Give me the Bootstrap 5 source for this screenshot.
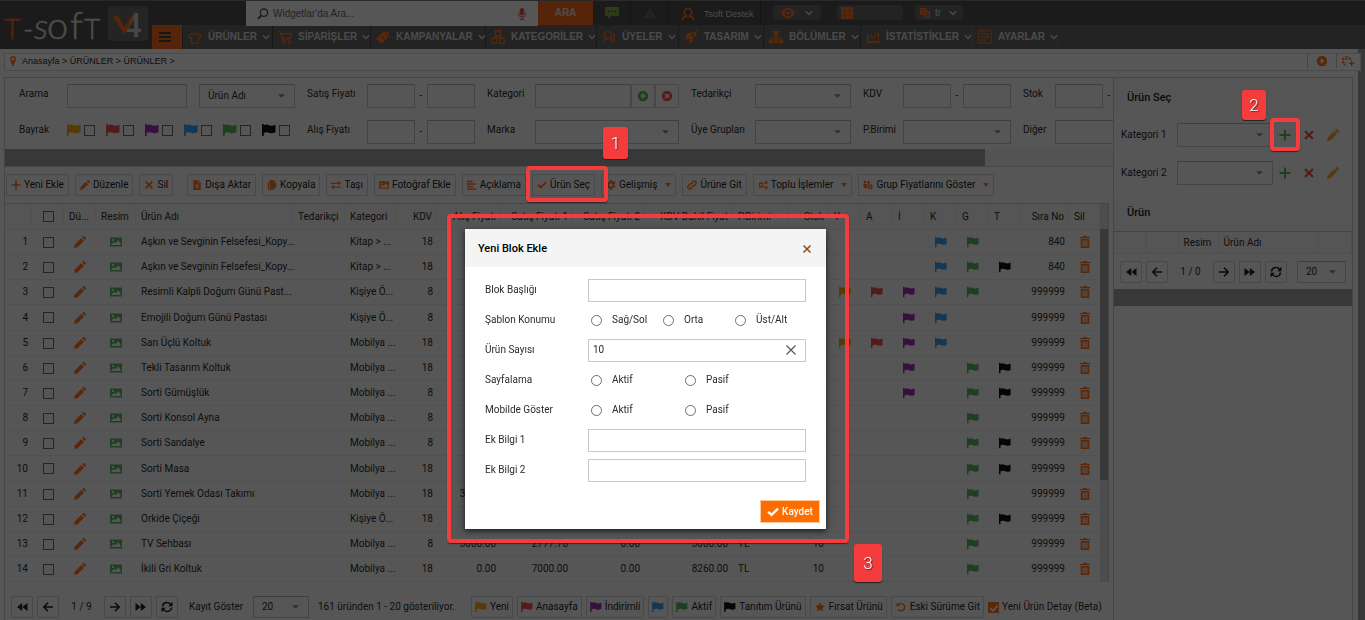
<!DOCTYPE html>
<html lang="tr">
<head>
<meta charset="utf-8">
<meta name="viewport" content="width=device-width, initial-scale=1">
<title>T-Soft V4 - Ürünler</title>
<link href="https://cdn.jsdelivr.net/npm/bootstrap@5.3.0/dist/css/bootstrap.min.css" rel="stylesheet">
<style>
:root{--or:#ff7420;--line:#ccc;--ink:#2b2b2b}
html,body{height:100%}
body{font-family:Roboto,"Liberation Sans",sans-serif;font-size:10px;line-height:14px;color:var(--ink);background:#fafafa;overflow:hidden}
a{color:inherit;text-decoration:none}
button,input,select{font:inherit;color:inherit}
.ic{width:12px;height:12px;flex:none;fill:currentColor;display:block}
.ic.s14{width:14px;height:14px}
.ic.s8{width:8px;height:8px}
.or{color:var(--or)} .fy{color:#ffa61a} .fr{color:#f4504d} .fp{color:#a032b4} .fb{color:#42a0ec} .fg{color:#5cb860} .fk{color:#111}
/* top area */
.site-head{background:#505050;border-top:1px solid #777;height:49px;color:#d8d8d8;font-family:"Liberation Sans",sans-serif}
.logo-box{width:152px}
.head-right{min-width:0}
.search-wrap{margin:0 0 -1px 94px;width:292px;background:#fafafa;height:25px;color:#555;padding:0 10px 0 11px;position:relative}
.search-wrap input{border:0;background:none;outline:0;min-width:0;padding:0 0 0 4px}
.search-wrap input::placeholder{color:#666;opacity:1}
.btn-ara{width:55px;height:24px;border:0;background:#f96a1e;color:#ddd;font-size:10px;font-weight:700}
.cell{border-right:1px solid #3c3c3c;height:24px;width:38px}
.cell-user{width:92px;font-size:9px;gap:9px;padding-left:12px;padding-top:2px}
.pill{background:#676767;border:0;border-radius:3px;height:15px}
.main-nav{background:#676767;height:24px}
.burger{width:30px;height:24px;border:0;background:#f96a1e;color:#444}
.main-nav a{border-left:1px solid #484848;height:24px;font-weight:700;padding:0 5px;gap:5px;white-space:nowrap}
.main-nav a span{padding-left:1px}
.w-a{width:90px}.w-b{width:98px}.w-c{width:115px}.w-d{width:111px}.w-e{width:82px}.w-f{width:85px}.w-g{width:97px}.w-h{width:112px}.w-i{width:86px}
/* content */
.canvas{border-right:7px solid #a3a3a3;height:calc(100vh - 49px)}
.crumb{margin:4px -3px 0 4px;height:18px;border:1px solid #dadada;font-family:"Liberation Sans",sans-serif;font-size:9px;background:#fff;padding-bottom:3px}
.crumb .tool{border-left:1px solid #c4c4c4;height:14px}
.workspace{margin:6px 5px 0 4px;border:1px solid var(--line);border-bottom:0;flex:1}
.side{width:239px;flex:none;border-left:1px solid var(--line)}
.filters{display:grid;grid-template-columns:48px 228px 72px 108px 60px 144px 76px 96px 52px 108px 44px 108px;grid-auto-rows:24px;row-gap:12px;padding:6px 0 5px 14px;overflow:hidden}
.filters>label,.filters>.lab{padding:3px 0 0 12px}
.filters>.first{padding-left:0}
.flagpair{width:39px;gap:3px;flex:none}
.fld{border:1px solid #c6c6c6;border-top-color:#b4b4b4;background:transparent;height:24px;border-radius:0;padding:0 4px;outline:0;min-width:0}
.fld.w48{width:48px}.fld.w120{width:120px}.fld.w96{width:96px}
select.fld{appearance:none;padding:0 22px 0 8px;background:url("data:image/svg+xml,%3Csvg xmlns='http://www.w3.org/2000/svg' viewBox='0 0 8 4'%3E%3Cpath fill='%23888' d='M0 0h8L4 4z'/%3E%3C/svg%3E") no-repeat right 9px center/7px 4px}
.sqb{width:24px;height:24px;border:1px solid #d0d0d0;background:none;padding:0}
input[type=checkbox],input[type=radio]{appearance:none;width:11px;height:11px;border:1px solid #6c6c6c;margin:0;flex:none;background:transparent}
input[type=radio]{border-radius:50%}
.hbar{height:18px;background:#efefef;border-bottom:1px solid #ccc}
.hbar>div{background:#a3a3a3;height:17px;width:980px}
.toolbar{padding:7px 0 7px 1px;gap:6px}
.tb{height:22px;border:1px solid #d2d2d2;border-radius:1px;background:none;gap:3px;padding:0 4px;white-space:nowrap;display:flex;align-items:center;color:#222}
.tb .ic{width:10px;height:10px}
.pager .tb{padding:0 3px}
.pager .tb .ic{width:12px;height:10px}
.caret{border:3px solid transparent;border-top:4px solid var(--or);border-bottom:0;margin-left:5px}
/* product grid */
.gridbox{border-top:1px solid var(--line);border-right:1px solid var(--line);margin-right:4px}
.grid-t{table-layout:fixed;width:100%;border-collapse:separate;border-spacing:0}
.grid-t th{height:26px;font-weight:400;border-right:1px solid #ebebeb;border-bottom:1px solid #ebebeb;background:#f6f6f6;padding:0 4px 0 5px}
.grid-t td{height:25px;border-bottom:1px solid #eaeaea;padding:0 5px;overflow:hidden;white-space:nowrap;text-overflow:ellipsis}
.grid-t tr:nth-child(6n+4) td{height:26px}
.grid-t td:nth-child(5){padding-right:0;overflow:visible}
.grid-t th{overflow:hidden;white-space:nowrap}
.grid-t .ic{margin:0 auto}
.vbar{width:8px;background:#dedede}
.vbar>div{height:251px;background:#a3a3a3;margin-top:25px}
.pager{padding:14px 0 0 6px}
.pg{width:22px;height:22px;border:1px solid #d0d0d0;border-radius:1px;background:none;padding:0;color:#222;flex:none}
/* side panel */
.side-h{height:38px;padding:2px 0 0 13px;background:#f7f7f7;font-size:11px;font-weight:500;color:#222}
.side-r{padding:0 0 0 7px;height:24px}
.side-r label{width:56px}
.act{width:24px;height:24px;border:0;background:none;padding:0}
.side-t{table-layout:fixed;width:100%;border-top:1px solid #c4c4c4}
.side-t th{font-weight:400;height:22px;border-right:1px solid #e6e6e6;border-bottom:1px solid #e6e6e6;background:#f6f6f6;padding:0 5px}
/* overlay layers */
.dimmer{position:fixed;inset:0;background:#000;opacity:.655;z-index:10}
.dlg{position:absolute;left:465px;top:229px;width:361px;height:300px;background:#fff;z-index:20;box-shadow:0 2px 6px rgba(0,0,0,.7)}
.dlg-h{height:38px;background:#f4f4f4;padding:2px 13px 0;font-size:11px;font-weight:500;color:#000}
.dlg-b{padding:8px 20px 0}
.dlg-r{height:30px}
.dlg-r>.cap{width:103px;flex:none}
.dlg .fld{height:23px;border-color:#c8c8c8}
.opt{gap:10px;padding-left:3px}
.o3{width:72px}.o2{width:94px}
.btn-save{background:#ff6c00;border:1px solid #ffc9a0;color:#fff;width:60px;height:23px;font-weight:500;padding:0;gap:3px}
.ring{position:absolute;border:4px solid #f43c3c;border-radius:4px;z-index:30;pointer-events:none;box-shadow:0 1px 1px rgba(0,0,0,.5)}
.tag{position:absolute;background:#f43c3c;color:#fff;border-radius:3px;font-size:17px;font-weight:300;z-index:30;text-shadow:1px 1px 1px #333;box-shadow:0 1px 1px #222}
.ring-1{inset:-8px -13px -6px -6px}.tag-1{left:71px;top:-47px;width:25px;height:32px}
.ring-2{inset:-5px -3px -4px -3px}.tag-2{left:-31px;top:-33px;width:24px;height:30px}
.ring-3{inset:-15px -23px -14px -18px}.tag-3{left:389px;top:315px;width:28px;height:38px}
</style>
</head>
<body>
<svg width="0" height="0" class="d-none">
<symbol id="flag" viewBox="0 0 14 12"><path d="M0 0h1.700v1.200C4-.3 5.600 .6 7 1.300c2 .8 3.500.6 6.500-.5v7.400c-2.500 1.200-4.500 1.400-6.500.5-2-.8-3.500-.7-5.300.2V12H0z"/></symbol>
<symbol id="pen" viewBox="0 0 12 12"><path d="M0 12l.8-3.600L7.200 2l2.800 2.800L3.600 11.200zM8 1.200L9 .2c.4-.3.8-.3 1.200 0l1.600 1.600c.3.4.3.8 0 1.200l-1 1z"/></symbol>
<symbol id="imgg" viewBox="0 0 12 12"><path fill-rule="evenodd" d="M0 1.500h12v9H0zM1.500 9h9V7L8 4.200 6 7 4.500 6 1.500 8zM3 3a1.100 1.100 0 100 2.200A1.100 1.100 0 003 3z"/></symbol>
<symbol id="trash" viewBox="0 0 12 14"><path fill-rule="evenodd" d="M4 0h4l.6 1.300H12v1.400H0V1.300h3.400zM1 3.600h10V14H1zM3.200 5.200v7h1.200v-7zm2.200 0v7h1.200v-7zm2.200 0v7h1.200v-7z"/></symbol>
<symbol id="plus" viewBox="0 0 12 12"><path d="M5 .5h2V5h4.500v2H7v4.500H5V7H.5V5H5z"/></symbol>
<symbol id="x" viewBox="0 0 12 12"><path d="M2.800 1.200L6 4.400l3.200-3.200 1.600 1.600L7.600 6l3.200 3.200-1.600 1.600L6 7.600l-3.200 3.200-1.600-1.600L4.400 6 1.200 2.800z"/></symbol>
<symbol id="check" viewBox="0 0 12 12"><path d="M.3 6.600l1.700-1.700 2.500 2.400L10.200 1.700l1.600 1.700-7.300 7.200z"/></symbol>
<symbol id="file" viewBox="0 0 12 12"><path fill-rule="evenodd" d="M1.500 0h5.300v3.300h3.700V12h-9zM7.700 0l2.800 2.600H7.700zM4 5l1.300 2L4 9.500h1.200l.8-1.400.8 1.400H8L6.700 7.200 8 5H6.800L6 6.200 5.200 5z"/></symbol>
<symbol id="copy" viewBox="0 0 12 12"><path d="M3.500 0H8v3h3v6.500H3.500zM8.700 0L11 2.300H8.700zM1 2.500h1.700v7.800h6.300V12H1z"/></symbol>
<symbol id="swap" viewBox="0 0 12 12"><path d="M0 3.200h8.500V1L12 4 8.500 6.600V4.700H0zM12 9.300H3.500v2L0 8.600l3.500-2.900v2.100H12z"/></symbol>
<symbol id="lines" viewBox="0 0 12 12"><path d="M0 1h7v1.600H0zM0 4h11v1.600H0zM0 7h7v1.600H0zM0 10h11v1.600H0z"/></symbol>
<symbol id="gear" viewBox="0 0 12 12"><path fill-rule="evenodd" d="M4.800 0h2.400l.4 1.700 1 .5 1.700-.6 1.200 2-1.300 1.200v1.400l1.300 1.200-1.200 2-1.700-.5-1 .6L7.200 12H4.800l-.4-1.900-1-.5-1.700.6-1.200-2 1.300-1.300V5.500L.5 4.200l1.200-2 1.700.6 1-.6zM6 4a2 2 0 100 4 2 2 0 000-4z"/></symbol>
<symbol id="gears" viewBox="0 0 14 12"><path fill-rule="evenodd" d="M3.600 1.800h1.800l.4 1.300 1.300-.5L8.400 4.200l-1 1v1.600l1 1-1.300 1.600-1.300-.5-.4 1.400H3.600l-.4-1.400-1.300.5L.6 7.800l1-1V5.200l-1-1L1.900 2.600l1.300.5zM4.500 4.400a1.600 1.600 0 100 3.200 1.600 1.600 0 000-3.200zM11.300 0a2.500 2.500 0 110 5 2.500 2.500 0 010-5zm0 1.600a.9.9 0 100 1.800.9.9 0 000-1.800zm0 5.400a2.500 2.500 0 110 5 2.500 2.500 0 010-5zm0 1.600a.9.9 0 100 1.800.9.9 0 000-1.800z"/></symbol>
<symbol id="link" viewBox="0 0 12 12"><path fill="none" stroke="currentColor" stroke-width="1.700" d="M5 7.200a2.200 2.200 0 003.200 0l2.100-2.100a2.200 2.200 0 00-3.200-3.200L6 3M7 4.800a2.200 2.200 0 00-3.200 0L1.700 6.900a2.200 2.200 0 003.200 3.200L6 9"/></symbol>
<symbol id="group" viewBox="0 0 14 12"><path fill-rule="evenodd" d="M2 0a2 2 0 012.500 2A2 2 0 012 3.800 2 2 0 012 0zm4 1.500a2 2 0 013.800 1A2 2 0 016 3.600zM.500 4.500h6l-1 6h-3C.500 9.500.500 7 .500 4.500zM10 5a3.500 3.500 0 110 7 3.500 3.500 0 010-7zm0 2.300a1.200 1.200 0 100 2.400 1.200 1.200 0 000-2.400z"/></symbol>
<symbol id="star" viewBox="0 0 12 12"><path d="M6 0l1.800 3.900 4.200.5-3.100 2.900.8 4.200L6 9.400l-3.700 2.100.8-4.200L0 4.400l4.200-.5z"/></symbol>
<symbol id="undo" viewBox="0 0 12 12"><path d="M.5.5L2.300 2.200A5.400 5.400 0 111.800 9.600l1.500-1.200a3.500 3.500 0 10.300-4.800L5.200 5.200H.5z"/></symbol>
<symbol id="ok" viewBox="0 0 12 12"><path d="M2.200 6.200l2.700 2.600 5-5.300" fill="none" stroke="#fff" stroke-width="1.600"/></symbol>
<symbol id="rew" viewBox="0 0 12 12"><path d="M6.200 2v8L1 6zM11.500 2v8L6.300 6z"/></symbol>
<symbol id="fwd" viewBox="0 0 12 12"><path d="M.5 2v8L5.700 6zM5.800 2v8L11 6z"/></symbol>
<symbol id="left" viewBox="0 0 12 12"><path fill="none" stroke="currentColor" stroke-width="1.600" d="M11 6H2M6 1.800L1.800 6 6 10.200"/></symbol>
<symbol id="right" viewBox="0 0 12 12"><path fill="none" stroke="currentColor" stroke-width="1.600" d="M1 6h9M6 1.800L10.200 6 6 10.200"/></symbol>
<symbol id="sync" viewBox="0 0 12 12"><path fill="none" stroke="currentColor" stroke-width="1.600" d="M1.500 5.500A4.500 4.500 0 0110 4M10.500 6.500A4.500 4.500 0 012 8"/><path d="M11.500.8v4.400H7.200zM.5 11.200V6.800h4.300z"/></symbol>
<symbol id="chev" viewBox="0 0 8 8"><path fill="none" stroke="currentColor" stroke-width="1.400" d="M.8 2.300L4 5.500l3.200-3.200"/></symbol>
<symbol id="cplus" viewBox="0 0 12 12"><path fill-rule="evenodd" d="M6 .8a5.200 5.200 0 110 10.400A5.200 5.200 0 016 .8zM5.200 3.300v1.900H3.300v1.600h1.900v1.900h1.600V6.800h1.900V5.200H6.800V3.300z"/></symbol>
<symbol id="cx" viewBox="0 0 12 12"><path fill-rule="evenodd" d="M6 .8a5.200 5.200 0 110 10.400A5.200 5.200 0 016 .8zM4.600 3.500L3.500 4.600 4.900 6 3.500 7.400l1.100 1.100L6 7.100l1.400 1.400 1.100-1.100L7.100 6l1.400-1.400-1.100-1.100L6 4.900z"/></symbol>
<symbol id="mag" viewBox="0 0 12 12"><path fill="none" stroke="currentColor" stroke-width="1.300" d="M7 1a3.700 3.700 0 110 7.400A3.700 3.700 0 017 1z"/><path stroke="currentColor" stroke-width="2" d="M4.400 7.400L1 10.700"/></symbol>
<symbol id="mic" viewBox="0 0 12 12"><path d="M6 0c3 0 2.200 3 2.200 4.500S8 7.500 6 7.500 3.800 6 3.800 4.500 3 0 6 0zM2 4.500h1c0 3 1 4 3 4s3-1 3-4h1c0 3-1 4.700-3.500 5V11H8v1H4v-1h1.500V9.500C3 9.200 2 7.500 2 4.500z"/></symbol>
<symbol id="chat" viewBox="0 0 14 12"><path fill-rule="evenodd" d="M0 0h14v8.800H6L2.800 12V8.800H0zM3 3.500v1.700h1.700V3.500zm3.200 0v1.700h1.700V3.500zm3.200 0v1.700h1.700V3.500z"/></symbol>
<symbol id="warn" viewBox="0 0 12 12"><path fill-rule="evenodd" d="M6 1l6 10.500H0zM5.400 4.500v4h1.200v-4zm0 4.900v1.200h1.200V9.400z"/></symbol>
<symbol id="user" viewBox="0 0 14 14"><path fill="none" stroke="currentColor" stroke-width="1.400" d="M7 1.500a3.800 3.800 0 110 7.600 3.800 3.800 0 010-7.600zM1.500 13.300c.3-2.800 1.500-3.600 3.300-4.400m4.400 0c1.800.8 3 1.600 3.300 4.400"/></symbol>
<symbol id="eye" viewBox="0 0 14 10"><path fill-rule="evenodd" d="M0 5c3.500-6.600 10.500-6.600 14 0-3.500 6.600-10.500 6.600-14 0zm7-3.200a3.200 3.200 0 100 6.400 3.200 3.200 0 000-6.400zm0 1.400a1.800 1.800 0 110 3.600 1.800 1.800 0 010-3.600z"/></symbol>
<symbol id="nine" viewBox="0 0 13 13"><path d="M0 0h4v4H0zM4.600 0h4v4h-4zM9.200 0h3.800v4H9.200zM0 4.600h4v4H0zM4.600 4.600h4v4h-4zM9.200 4.600h3.800v4H9.200zM0 9.200h4V13H0zM4.600 9.200h4V13h-4zM9.200 9.200h3.800V13H9.200z"/></symbol>
<symbol id="lang" viewBox="0 0 12 12"><path fill-rule="evenodd" d="M1 1h6.500v3H11v7H5V8H1zM2.500 2.500v1h3v-1zm0 2v1H5v-1zM6.500 5.500v1h3v-1zm0 2v2h3v-2z"/></symbol>
<symbol id="shirt" viewBox="0 0 14 14"><path fill="none" stroke="currentColor" stroke-width="1.100" d="M7 3V1.200M4.500 3.500L1 5.500l1 3 1.700-.8v5.500h6.600V7.700l1.700.8 1-3-3.500-2C8.500 5 5.500 5 4.500 3.500z"/></symbol>
<symbol id="cart" viewBox="0 0 14 14"><path fill="none" stroke="currentColor" stroke-width="1.200" d="M0 1.500h2.500L4.500 10h8M3.500 3.800h9.800L12 8H4.300"/><path d="M5.500 11.300a1.200 1.200 0 110 2.400 1.200 1.200 0 010-2.400zm6 0a1.200 1.200 0 110 2.400 1.200 1.200 0 010-2.400z"/></symbol>
<symbol id="ptag" viewBox="0 0 14 14"><path fill-rule="evenodd" d="M6.500 2.500L12 1.200l1 .8-1 6L5.500 13.500 0 8.500zM10.500 3a1 1 0 100 2 1 1 0 000-2zM5 6.500l3 3 .8-.8-3-3z"/></symbol>
<symbol id="boxes" viewBox="0 0 14 14"><path fill="none" stroke="currentColor" stroke-width="1.200" d="M4.500.8h5v4.700h-5zM.8 8.500h4.700v4.700H.8zM8.500 8.500h4.700v4.700H8.500zM7 5.500v1.700M3 8.500V7.200h8v1.300"/></symbol>
<symbol id="users" viewBox="0 0 14 14"><path fill="none" stroke="currentColor" stroke-width="1.200" d="M6 1.500a3.600 3.600 0 110 7.200 3.600 3.600 0 010-7.200zM1 13.200c.3-2.600 1.200-3.400 3-4.400m4 0c1.800 1 2.700 1.800 3 4.400M10.500 2.500c2.500.8 2.500 4.500.5 6 1.200.6 1.700 1.200 2 2.500"/></symbol>
<symbol id="rocket" viewBox="0 0 14 14"><path fill-rule="evenodd" d="M13.500 0L9 2.500 4 3 1 6.500l1.500 1L1.500 10l3-1L6 10l-1.500 4L8.500 11l.5-3 3-3zM8.500 3.500a1.400 1.400 0 110 2.800 1.400 1.400 0 010-2.800z"/></symbol>
<symbol id="tree" viewBox="0 0 14 14"><path d="M4.700 1h4.600v4.600H7.700v2.200h4.500v1.800H14v3.600H10V9.600h1V9H7.700v.6h1.300v3.600H5V9.600h1.300V9H3v.6h1v3.600H0V9.600h1.800V7.800h4.500V5.600H4.700z"/></symbol>
<symbol id="chart" viewBox="0 0 14 14"><path fill="none" stroke="currentColor" stroke-width="1.100" d="M1.500 3v8.500h11V3M2.500 9.500L5 6l3 2 4-5M0 12.800h14"/></symbol>
<symbol id="sets" viewBox="0 0 14 14"><path fill="none" stroke="currentColor" stroke-width="1" d="M.8.8h12.400v12.400H.8zM3 4h8M3 7h8M3 10h5M5 3v2M9 6v2"/></symbol>
<symbol id="pin" viewBox="0 0 12 12"><path fill-rule="evenodd" d="M6 1a3 3 0 013 3C9 6 7 8 6.700 11H5.300C5 8 3 6 3 4a3 3 0 013-3zm0 1.600a1.400 1.400 0 100 2.800 1.400 1.400 0 000-2.800z"/></symbol>
<symbol id="play" viewBox="0 0 12 12"><path fill-rule="evenodd" d="M6 .8a5.200 5.200 0 110 10.400A5.200 5.200 0 016 .8zM4.700 3.500v5L8.500 6z"/></symbol>
<symbol id="globe" viewBox="0 0 14 12"><path fill="none" stroke="currentColor" stroke-width="1.300" stroke-dasharray="2.500 1" d="M9.700 4A4.300 4.300 0 105.500 10.300M1 4h9M1 7.500h4"/><path d="M10 5.500h1.300v2.200h2.200V9h-2.200v2.200H10V9H7.800V7.700H10z"/></symbol>
</svg>

<header class="site-head d-flex">
  <div class="logo-box">
    <svg width="152" height="48" viewBox="0 0 152 48" role="img" aria-label="T-Soft V4">
      <rect x="108" y="5" width="40" height="35" rx="3" fill="#6a6a6a"/>
      <g font-family="Lato" font-weight="300" font-size="28" fill="#ddd" stroke="#ddd" stroke-width=".5"><text x="4" y="38" fill="#f96a1e" stroke="#f96a1e">T</text><text x="23" y="38">-</text><text x="34" y="38" font-size="36" font-style="italic">s</text><text x="47" y="38" font-size="38">o</text><text x="70" y="38" font-size="38">f</text><text x="84" y="38">T</text></g>
      <text x="123" y="36" font-family="Roboto" font-weight="500" font-size="33" fill="#ccc">4</text>
      <path d="M113 16l5-2 6 12L137 8l-12 26z" fill="#f96a1e"/>
    </svg>
  </div>
  <div class="head-right flex-grow-1">
    <div class="d-flex align-items-start">
      <label class="search-wrap d-flex align-items-center"><svg class="ic"><use href="#mag"/></svg><input class="flex-grow-1" type="text" placeholder="Widgetlar'da Ara..." aria-label="Widget ara"><svg class="ic fr"><use href="#mic"/></svg></label>
      <button class="btn-ara">ARA</button>
      <div class="cell d-flex align-items-center justify-content-center" style="color:#8cab4a"><svg class="ic s14"><use href="#chat"/></svg></div>
      <div class="cell d-flex align-items-center justify-content-center" style="color:#6c6c6c"><svg class="ic"><use href="#warn"/></svg></div>
      <div class="cell cell-user d-flex align-items-center"><svg class="ic or s14"><use href="#user"/></svg><span class="text-nowrap">Tsoft Destek</span></div>
      <button class="pill d-flex align-items-center justify-content-between mt-1 px-2" style="width:48px;margin-left:12px" aria-label="Görünüm"><svg class="ic or s14"><use href="#eye"/></svg><svg class="ic s8"><use href="#chev"/></svg></button>
      <button class="pill d-flex align-items-center mt-1 ms-3 px-1" style="width:66px" aria-label="Menü"><svg class="ic or"><use href="#nine"/></svg></button>
      <button class="pill d-flex align-items-center mt-1 px-1 gap-1" style="width:48px;margin-left:12px"><svg class="ic or"><use href="#lang"/></svg><span>tr</span><svg class="ic s8 ms-1"><use href="#chev"/></svg></button>
    </div>
    <nav class="main-nav d-flex">
      <button class="burger" aria-label="Menü"><svg class="ic s14" viewBox="0 0 14 14"><path d="M1 2h12v2H1zM1 6h12v2H1zM1 10h12v2H1z"/></svg></button>
      <a href="#" class="d-flex align-items-center w-a"><svg class="ic or s14"><use href="#shirt"/></svg><span>ÜRÜNLER</span><svg class="ic s8 ms-auto"><use href="#chev"/></svg></a>
      <a href="#" class="d-flex align-items-center w-b"><svg class="ic or s14"><use href="#cart"/></svg><span>SİPARİŞLER</span><svg class="ic s8 ms-auto"><use href="#chev"/></svg></a>
      <a href="#" class="d-flex align-items-center w-c"><svg class="ic or s14"><use href="#ptag"/></svg><span>KAMPANYALAR</span><svg class="ic s8 ms-auto"><use href="#chev"/></svg></a>
      <a href="#" class="d-flex align-items-center w-d"><svg class="ic or s14"><use href="#boxes"/></svg><span>KATEGORİLER</span><svg class="ic s8 ms-auto"><use href="#chev"/></svg></a>
      <a href="#" class="d-flex align-items-center w-e"><svg class="ic or s14"><use href="#users"/></svg><span>ÜYELER</span><svg class="ic s8 ms-auto"><use href="#chev"/></svg></a>
      <a href="#" class="d-flex align-items-center w-f"><svg class="ic or s14"><use href="#rocket"/></svg><span>TASARIM</span><svg class="ic s8 ms-auto"><use href="#chev"/></svg></a>
      <a href="#" class="d-flex align-items-center w-g"><svg class="ic or s14"><use href="#tree"/></svg><span>BÖLÜMLER</span><svg class="ic s8 ms-auto"><use href="#chev"/></svg></a>
      <a href="#" class="d-flex align-items-center w-h"><svg class="ic or s14"><use href="#chart"/></svg><span>İSTATİSTİKLER</span><svg class="ic s8 ms-auto"><use href="#chev"/></svg></a>
      <a href="#" class="d-flex align-items-center w-i border-end border-secondary"><svg class="ic or s14"><use href="#sets"/></svg><span>AYARLAR</span><svg class="ic s8 ms-auto"><use href="#chev"/></svg></a>
    </nav>
  </div>
</header>

<div class="canvas d-flex flex-column">
  <div class="crumb d-flex align-items-center flex-shrink-0">
    <svg class="ic or" style="margin:0 3px 0 2px"><use href="#pin"/></svg><nav aria-label="Konum"><a href="#">Anasayfa</a> &gt; <a href="#">ÜRÜNLER</a> &gt; <a href="#">ÜRÜNLER</a> &gt;</nav>
    <a href="#" class="tool ms-auto px-2 d-flex align-items-center" aria-label="Video"><svg class="ic or"><use href="#play"/></svg></a>
    <a href="#" class="tool d-flex align-items-center ps-1" style="padding-right:5px" aria-label="Dil ekle"><svg class="ic or s14"><use href="#globe"/></svg></a>
  </div>

  <div class="workspace d-flex">
    <main class="flex-grow-1" style="min-width:0">
      <form class="filters">
        <label class="first" for="q">Arama</label>
        <div class="d-flex justify-content-between"><input id="q" class="fld w120"><select class="fld w96" aria-label="Arama alanı"><option>Ürün Adı</option></select></div>
        <label for="s1">Satış Fiyatı</label>
        <div class="d-flex justify-content-between align-items-center"><input id="s1" class="fld w48">-<input class="fld w48" aria-label="Satış üst"></div>
        <label for="k">Kategori</label>
        <div class="d-flex"><input id="k" class="fld w96"><button type="button" class="sqb fg d-grid" style="place-items:center" aria-label="Ekle"><svg class="ic"><use href="#cplus"/></svg></button><button type="button" class="sqb fr d-grid" style="place-items:center" aria-label="Temizle"><svg class="ic"><use href="#cx"/></svg></button></div>
        <label for="ted">Tedarikçi</label><select id="ted" class="fld"></select>
        <label for="kdv">KDV</label>
        <div class="d-flex justify-content-between align-items-center"><input id="kdv" class="fld w48">-<input class="fld w48" aria-label="KDV üst"></div>
        <label for="stk">Stok</label>
        <div class="d-flex justify-content-between align-items-center"><input id="stk" class="fld w48">-<input class="fld w48" aria-label="Stok üst"></div>

        <span class="lab first">Bayrak</span>
        <div class="d-flex align-items-center pb-1" id="flagset"></div>
        <label for="a1">Alış Fiyatı</label>
        <div class="d-flex justify-content-between align-items-center"><input id="a1" class="fld w48">-<input class="fld w48" aria-label="Alış üst"></div>
        <label for="mrk">Marka</label><select id="mrk" class="fld"></select>
        <label for="uye">Üye Grupları</label><select id="uye" class="fld"></select>
        <label for="pb">P.Birimi</label><select id="pb" class="fld"></select>
        <label for="dg">Diğer</label><input id="dg" class="fld">
      </form>
      <div class="hbar"><div></div></div>

      <div class="toolbar d-flex">
        <button class="tb"><svg class="ic or"><use href="#plus"/></svg>Yeni Ekle</button>
        <button class="tb"><svg class="ic or"><use href="#pen"/></svg>Düzenle</button>
        <button class="tb me-2"><svg class="ic or"><use href="#x"/></svg>Sil</button>
        <button class="tb"><svg class="ic or"><use href="#file"/></svg>Dışa Aktar</button>
        <button class="tb"><svg class="ic or"><use href="#copy"/></svg>Kopyala</button>
        <button class="tb"><svg class="ic or"><use href="#swap"/></svg>Taşı</button>
        <button class="tb"><svg class="ic or"><use href="#imgg"/></svg>Fotoğraf Ekle</button>
        <button class="tb"><svg class="ic or"><use href="#lines"/></svg>Açıklama</button>
        <div class="position-relative"><button class="tb"><svg class="ic or"><use href="#check"/></svg>Ürün Seç</button><div class="ring ring-1"></div><div class="tag tag-1 d-grid" style="place-items:center">1</div></div>
        <button class="tb"><svg class="ic or"><use href="#gear"/></svg>Gelişmiş<i class="caret"></i></button>
        <button class="tb"><svg class="ic or"><use href="#link"/></svg>Ürüne Git</button>
        <button class="tb"><svg class="ic or"><use href="#gears"/></svg>Toplu İşlemler<i class="caret"></i></button>
        <button class="tb"><svg class="ic or"><use href="#group"/></svg>Grup Fiyatlarını Göster<i class="caret"></i></button>
      </div>

      <div class="gridbox d-flex">
        <table class="grid-t">
          <colgroup><col style="width:27px"><col style="width:32px"><col style="width:32px"><col style="width:40px"><col><col style="width:52px"><col style="width:52px"><col style="width:40px"><col style="width:64px"><col style="width:72px"><col style="width:72px"><col style="width:88px"><col style="width:56px"><col style="width:40px"><col style="width:32px"><col style="width:32px"><col style="width:32px"><col style="width:32px"><col style="width:32px"><col style="width:32px"><col style="width:48px"><col style="width:31px"></colgroup>
          <thead><tr><th></th><th><input type="checkbox" class="d-block mx-auto" aria-label="Tümünü seç"></th><th>Dü...</th><th>Resim</th><th>Ürün Adı</th><th>Tedarikçi</th><th>Kategori</th><th class="text-end">KDV</th><th class="text-end">Alış Fiyatı</th><th class="text-end">Satış Fiyatı 1</th><th class="text-end">Satış Fiyatı 2</th><th class="text-end">KDV Dahil Fiyat</th><th>P.Birimi</th><th class="text-end">Stok</th><th>Y</th><th>A</th><th>İ</th><th>K</th><th>G</th><th>T</th><th class="text-end">Sıra No</th><th>Sil</th></tr></thead>
          <tbody id="rows"></tbody>
        </table>
        <div class="vbar flex-shrink-0"><div></div></div>
      </div>

      <div class="pager d-flex align-items-center">
        <button class="pg d-grid me-1" style="place-items:center" aria-label="İlk"><svg class="ic"><use href="#rew"/></svg></button>
        <button class="pg d-grid" style="place-items:center" aria-label="Önceki"><svg class="ic"><use href="#left"/></svg></button>
        <span class="text-center flex-shrink-0" style="width:45px">1 / 9</span>
        <button class="pg d-grid me-1" style="place-items:center" aria-label="Sonraki"><svg class="ic"><use href="#right"/></svg></button>
        <button class="pg d-grid me-1" style="place-items:center" aria-label="Son"><svg class="ic"><use href="#fwd"/></svg></button>
        <button class="pg d-grid" style="place-items:center" aria-label="Yenile"><svg class="ic"><use href="#sync"/></svg></button>
        <label for="ps" class="flex-shrink-0" style="width:75px;padding-left:11px">Kayıt Göster</label>
        <select id="ps" class="fld flex-shrink-0" style="width:56px;height:22px"><option>20</option></select>
        <span style="width:162px;padding-left:9px" class="text-nowrap flex-shrink-0">161 üründen 1 - 20 gösteriliyor.</span>
        <div class="d-flex gap-1">
          <button class="tb"><svg class="ic fy"><use href="#flag"/></svg>Yeni</button>
          <button class="tb"><svg class="ic fr"><use href="#flag"/></svg>Anasayfa</button>
          <button class="tb"><svg class="ic fp"><use href="#flag"/></svg>İndirimli</button>
          <button class="tb" aria-label="Kampanyalı"><svg class="ic fb"><use href="#flag"/></svg></button>
          <button class="tb"><svg class="ic fg"><use href="#flag"/></svg>Aktif</button>
          <button class="tb"><svg class="ic fk"><use href="#flag"/></svg>Tanıtım Ürünü</button>
          <button class="tb"><svg class="ic or"><use href="#star"/></svg>Fırsat Ürünü</button>
          <button class="tb"><svg class="ic or"><use href="#undo"/></svg>Eski Sürüme Git</button>
        </div>
        <label class="d-flex align-items-center text-nowrap ms-1" style="gap:3px"><span class="position-relative"><input type="checkbox" checked class="d-block" style="background:var(--or);border-color:var(--or)"><svg class="ic position-absolute top-0 start-0"><use href="#ok"/></svg></span>Yeni Ürün Detay (Beta)</label>
      </div>
    </main>

    <aside class="side">
      <div class="side-h d-flex align-items-center">Ürün Seç</div>
      <div class="side-r d-flex align-items-center" style="margin-top:7px"><label for="c1">Kategori 1</label><select id="c1" class="fld w96"></select>
        <div class="position-relative"><button class="act fg d-grid" style="place-items:center" aria-label="Ekle"><svg class="ic"><use href="#plus"/></svg></button><div class="ring ring-2"></div><div class="tag tag-2 d-grid" style="place-items:center">2</div></div>
        <button class="act fr d-grid" style="place-items:center" aria-label="Sil"><svg class="ic"><use href="#x"/></svg></button><button class="act fy d-grid" style="place-items:center" aria-label="Düzenle"><svg class="ic"><use href="#pen"/></svg></button></div>
      <div class="side-r d-flex align-items-center" style="margin:14px 0 8px"><label for="c2">Kategori 2</label><select id="c2" class="fld w96"></select>
        <button class="act fg d-grid" style="place-items:center" aria-label="Ekle"><svg class="ic"><use href="#plus"/></svg></button>
        <button class="act fr d-grid" style="place-items:center" aria-label="Sil"><svg class="ic"><use href="#x"/></svg></button><button class="act fy d-grid" style="place-items:center" aria-label="Düzenle"><svg class="ic"><use href="#pen"/></svg></button></div>
      <div class="side-h d-flex align-items-center">Ürün</div>
      <table class="side-t"><colgroup><col style="width:32px"><col style="width:32px"><col style="width:40px"><col><col style="width:33px"></colgroup><thead><tr><th></th><th></th><th>Resim</th><th>Ürün Adı</th><th></th></tr></thead></table>
      <div class="d-flex align-items-center" style="padding:7px 6px 6px">
        <button class="pg d-grid me-1" style="place-items:center" aria-label="İlk"><svg class="ic"><use href="#rew"/></svg></button>
        <button class="pg d-grid" style="place-items:center" aria-label="Önceki"><svg class="ic"><use href="#left"/></svg></button>
        <span class="text-center" style="width:45px">1 / 0</span>
        <button class="pg d-grid me-1" style="place-items:center" aria-label="Sonraki"><svg class="ic"><use href="#right"/></svg></button>
        <button class="pg d-grid me-1" style="place-items:center" aria-label="Son"><svg class="ic"><use href="#fwd"/></svg></button>
        <button class="pg d-grid" style="place-items:center" aria-label="Yenile"><svg class="ic"><use href="#sync"/></svg></button>
        <select class="fld ms-auto" style="width:49px;height:22px" aria-label="Sayfa boyu"><option>20</option></select>
      </div>
      <div style="height:17px;background:#a3a3a3"></div>
    </aside>
  </div>
</div>

<div class="dimmer"></div>

<section class="dlg" role="dialog" aria-label="Yeni Blok Ekle">
  <div class="dlg-h d-flex align-items-center justify-content-between">Yeni Blok Ekle<button class="border-0 bg-transparent p-0" aria-label="Kapat"><svg class="ic" viewBox="0 0 12 12" style="color:#8a4a10"><path fill="none" stroke="currentColor" stroke-width="1.500" d="M2.500 2.500l7 7M9.500 2.500l-7 7"/></svg></button></div>
  <form class="dlg-b">
    <div class="dlg-r d-flex align-items-center"><label class="cap" for="m1">Blok Başlığı</label><input id="m1" class="fld flex-grow-1"></div>
    <div class="dlg-r d-flex align-items-center"><span class="cap">Şablon Konumu</span><label class="opt o3 d-flex align-items-center"><input type="radio" name="k">Sağ/Sol</label><label class="opt o3 d-flex align-items-center"><input type="radio" name="k">Orta</label><label class="opt o3 d-flex align-items-center"><input type="radio" name="k">Üst/Alt</label></div>
    <div class="dlg-r d-flex align-items-center"><label class="cap" for="m2">Ürün Sayısı</label><div class="fld flex-grow-1 d-flex align-items-center"><input id="m2" value="10" class="border-0 p-0 flex-grow-1 bg-transparent" style="outline:0"><svg class="ic me-1" viewBox="0 0 12 12"><path fill="none" stroke="#555" stroke-width="1.200" d="M1.500 1.500l9 9M10.500 1.500l-9 9"/></svg></div></div>
    <div class="dlg-r d-flex align-items-center"><span class="cap">Sayfalama</span><label class="opt o2 d-flex align-items-center"><input type="radio" name="s">Aktif</label><label class="opt o2 d-flex align-items-center"><input type="radio" name="s">Pasif</label></div>
    <div class="dlg-r d-flex align-items-center"><span class="cap">Mobilde Göster</span><label class="opt o2 d-flex align-items-center"><input type="radio" name="m">Aktif</label><label class="opt o2 d-flex align-items-center"><input type="radio" name="m">Pasif</label></div>
    <div class="dlg-r d-flex align-items-center"><label class="cap" for="m3">Ek Bilgi 1</label><input id="m3" class="fld flex-grow-1"></div>
    <div class="dlg-r d-flex align-items-center"><label class="cap" for="m4">Ek Bilgi 2</label><input id="m4" class="fld flex-grow-1"></div>
  </form>
  <div class="d-flex justify-content-end" style="padding:15px 6px 0"><button class="btn-save d-flex align-items-center justify-content-center"><svg class="ic"><use href="#check"/></svg>Kaydet</button></div>
  <div class="ring ring-3"></div><div class="tag tag-3 d-grid" style="place-items:center">3</div>
</section>

<script>
const ic=(n,c)=>`<svg class="ic ${c}"><use href="#${n}"/></svg>`;
const cols=['fy','fr','fp','fb','fg','fk'];
document.getElementById('flagset').innerHTML=cols.map(c=>`<label class="flagpair d-flex align-items-center">${ic('flag','s14 '+c)}<input type="checkbox" aria-label="Bayrak"></label>`).join('');
// name, category, VAT, flags (y r p b g k), order, prices
const data=[
['Aşkın ve Sevginin Felsefesi_Kopy...','Kitap > ...',18,'000110',840],
['Aşkın ve Sevginin Felsefesi_Kopy...','Kitap > ...',18,'000111',840],
['Resimli Kalpli Doğum Günü Past...','Kişiye Ö...',8,'111110',999999],
['Emojili Doğum Günü Pastası','Kişiye Ö...',8,'001100',999999],
['Sarı Üçlü Koltuk','Mobilya ...',18,'111100',999999],
['Tekli Tasarım Koltuk','Mobilya ...',18,'001011',999999],
['Sorti Gümüşlük','Mobilya ...',8,'001011',999999],
['Sorti Konsol Ayna','Mobilya ...',8,'000010',999999],
['Sorti Sandalye','Mobilya ...',8,'000011',999999],
['Sorti Masa','Mobilya ...',18,'000011',999999],
['Sorti Yemek Odası Takımı','Mobilya ...',18,'000010',999999,'3000.00','','','','',''],
['Orkide Çiçeği','Kişiye Ö...',18,'000011',999999],
['TV Sehbası','Mobilya ...',8,'000010',999999,'3000.00','2777.78','0.00','3000.00','TL','10'],
['İkili Gri Koltuk','Mobilya ...',18,'000010',999999,'0.00','7000.00','0.00','8260.00','TL','10']];
document.getElementById('rows').innerHTML=data.map((r,i)=>{
 const p=[5,6,7,8,9,10].map(k=>`<td class="${k==9?'':'text-end'}">${r[k]||''}</td>`).join('');
 return `<tr><td class="text-end px-1">${i+1}</td><td><input type="checkbox" class="d-block mx-auto" aria-label="Seç"></td><td>${ic('pen','or')}</td><td>${ic('imgg','fg')}</td><td>${r[0]}</td><td></td><td class="pe-0">${r[1]}</td><td class="text-end px-1">${r[2]}</td>${p}${[...r[3]].map((f,j)=>`<td>${f=='1'?ic('flag',cols[j]):''}</td>`).join('')}<td class="text-end px-1">${r[4]}</td><td>${ic('trash','or')}</td></tr>`}).join('');
</script>
<script src="https://cdn.jsdelivr.net/npm/bootstrap@5.3.0/dist/js/bootstrap.bundle.min.js"></script>
</body>
</html>
